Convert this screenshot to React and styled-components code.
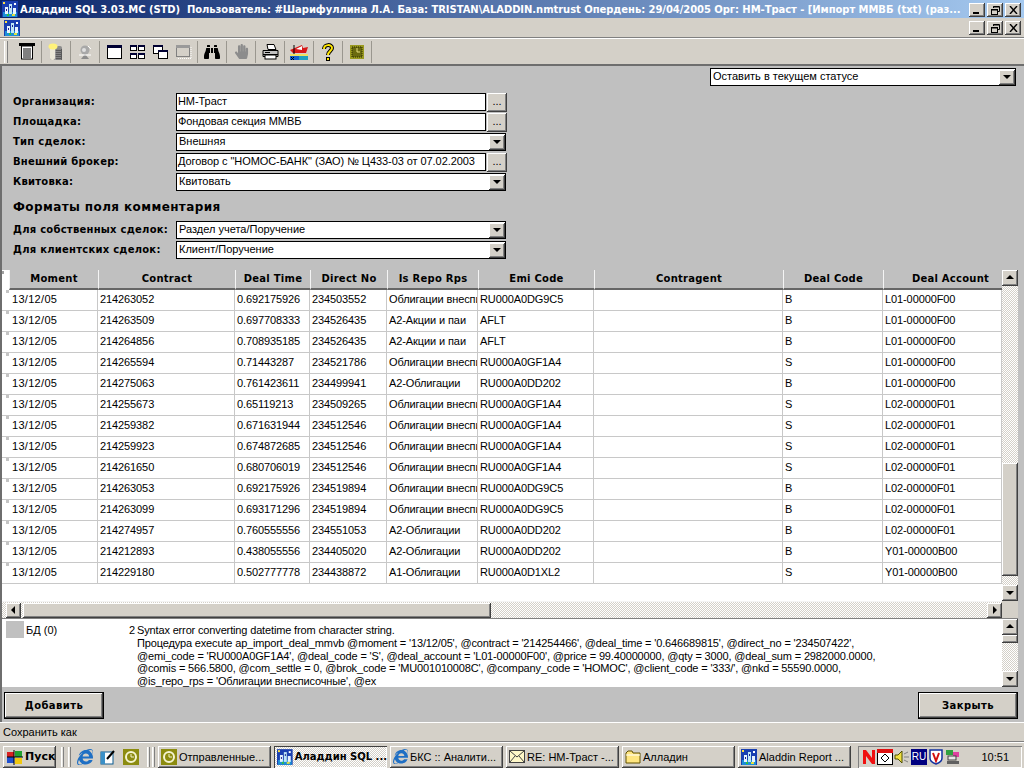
import React from 'react';
import styled, { createGlobalStyle, css } from 'styled-components';
import { FaBinoculars, FaHandPaper, FaInternetExplorer } from 'react-icons/fa';

const GlobalStyle = createGlobalStyle`
  html, body {
    margin: 0;
    padding: 0;
    background: #d4d0c8;
    overflow: hidden;
  }
  * { box-sizing: border-box; }
`;

const UI_FONT = `"Liberation Sans", Arial, sans-serif`;
const BOLD_FONT = `"DejaVu Sans", Verdana, sans-serif`;

const raised = css`
  background-color: #d4d0c8;
  box-shadow: inset -1px -1px 0 #404040, inset 1px 1px 0 #ffffff, inset -2px -2px 0 #808080;
`;

const dither = css`
  background: repeating-conic-gradient(#d4d0c8 0 25%, #ffffff 0 50%) 0 0 / 2px 2px;
`;

const Screen = styled.div`
  width: 1024px;
  height: 768px;
  display: flex;
  flex-direction: column;
  font: 11px ${UI_FONT};
  color: #000;
  overflow: hidden;
`;

const TitleBar = styled.div`
  height: 18px;
  display: flex;
  align-items: center;
  padding: 0 3px 0 2px;
  background: linear-gradient(90deg, #0a246a 0%, #a6caf0 100%);
  flex: none;
`;

const TitleText = styled.div`
  flex: 1;
  margin-left: 2px;
  color: #fff;
  font: bold 10px ${BOLD_FONT};
  letter-spacing: -0.06px;
  white-space: pre;
  overflow: hidden;
`;

const WinButtons = styled.div`
  display: flex;
  align-items: center;
  margin-top: ${p => (p.$inner ? '1px' : '2px')};
`;

const WinButton = styled.div`
  ${raised}
  width: 16px;
  height: 14px;
  display: flex;
  align-items: center;
  justify-content: center;
  margin-left: ${p => (p.$gap ? '2px' : '0')};
`;

const MenuBar = styled.div`
  height: 20px;
  display: flex;
  align-items: center;
  justify-content: space-between;
  padding: 0 3px 0 4px;
  background: #d4d0c8;
  border-bottom: 1px solid #808080;
  box-shadow: 0 1px 0 #ffffff;
  flex: none;
`;

const Toolbar = styled.div`
  height: 25px;
  margin-top: 1px;
  display: flex;
  align-items: center;
  padding-left: 4px;
  background: #d4d0c8;
  flex: none;
`;

const Gripper = styled.div`
  width: 4px;
  height: 22px;
  margin-right: 5px;
  background: #e4e1da;
  border-right: 1px solid #808080;
  border-left: 1px solid #ffffff;
`;

const ToolGroup = styled.div`
  display: flex;
  align-items: center;
  height: 22px;
  padding: ${p => (p.$wide ? '0 2px 0 3px' : '0')};
  border-right: 1px solid #9a978f;
`;

const ToolButton = styled.div`
  width: ${p => (p.$narrow ? '23px' : '28px')};
  display: flex;
  align-items: center;
  justify-content: center;
  color: ${p => p.$color || '#000'};
`;

const Client = styled.div`
  height: 658px;
  flex: none;
  display: flex;
  flex-direction: column;
  background: #c0c0c0;
  border-top: 2px solid #6e6e6e;
  border-left: 2px solid #6e6e6e;
`;

const TopRow = styled.div`
  display: flex;
  justify-content: flex-end;
  padding: 2px 8px 0 0;
`;

const Combo = styled.div`
  width: ${p => p.$width}px;
  height: 18px;
  display: flex;
  align-items: center;
  justify-content: space-between;
  padding: 0 1px 0 2px;
  background: #fff;
  border: 1px solid #000;
  font-size: 11px;
  white-space: nowrap;
`;

const ComboText = styled.span`
  margin-bottom: 2px;
`;

const ComboArrow = styled.div`
  ${raised}
  width: 16px;
  height: 15px;
  display: flex;
  align-items: center;
  justify-content: center;
  flex: none;
  margin-right: -1px;
`;

const Form = styled.div`
  margin: ${p => (p.$flush ? '0' : '7px')} 0 0 11px;
  display: grid;
  grid-template-columns: 163px 1fr;
  grid-auto-rows: 18px;
  row-gap: 2px;
  align-items: center;
`;

const FormLabel = styled.div`
  padding-bottom: 2px;
  font: bold 10px ${BOLD_FONT};
  letter-spacing: 0.25px;
  white-space: nowrap;
`;

const Heading = styled.div`
  height: 30px;
  margin-left: 11px;
  padding-top: 2px;
  display: flex;
  align-items: center;
  font: bold 12px ${BOLD_FONT};
  letter-spacing: 0.4px;
`;

const FieldRow = styled.div`
  display: flex;
  align-items: center;
`;

const Field = styled.div`
  width: 310px;
  height: 18px;
  display: flex;
  align-items: center;
  padding: 0 0 2px 1px;
  background: #fff;
  border: 1px solid #000;
  letter-spacing: -0.07px;
  white-space: nowrap;
  overflow: hidden;
`;

const DotsButton = styled.div`
  ${raised}
  width: 20px;
  height: 19px;
  margin-left: 1px;
  display: flex;
  align-items: center;
  justify-content: center;
  padding-bottom: 2px;
  font-size: 11px;
`;

const TableArea = styled.div`
  margin-top: 11px;
  width: 1016px;
  height: 348px;
  display: grid;
  grid-template-columns: 1000px 16px;
  grid-template-rows: 331px 17px;
`;

const TableBody = styled.div`
  background: #fff;
  overflow: hidden;
`;

const Row = styled.div`
  display: grid;
  grid-template-columns: 7px 89px 137px 75px 77px 91px 116px 189px 100px 119px;
  height: ${p => (p.$head ? '20px' : '21px')};
`;

const HeadCorner = styled.div`
  background: linear-gradient(#a0a0a0, #a0a0a0) right 5px top 1px / 2px 3px no-repeat, #fff;
`;

const HeadCell = styled.div`
  background: #c0c0c0;
  border-left: 1px solid #f4f4f4;
  border-bottom: 2px solid #666;
  display: flex;
  align-items: center;
  justify-content: center;
  padding: 0 0 2px ${p => (p.$clipped ? '15px' : '0')};
  font: bold 10px ${BOLD_FONT};
  letter-spacing: 0.25px;
  white-space: nowrap;
  overflow: hidden;
`;

const RowMark = styled.div`
  background: linear-gradient(#c4c4c4, #c4c4c4) right top / 3px 3px no-repeat, #fff;
  border-bottom: 1px solid #c8c8c8;
`;

const Cell = styled.div`
  display: flex;
  align-items: center;
  padding: 0 0 2px ${p => (p.$date ? '3px' : '2px')};
  border-right: 1px solid #c8c8c8;
  border-bottom: 1px solid #c8c8c8;
  font-size: 11px;
  letter-spacing: ${p => (p.$date ? '0.3px' : '-0.1px')};
  white-space: nowrap;
  overflow: hidden;
`;

const VScroll = styled.div`
  display: flex;
  flex-direction: column;
  height: ${p => p.$height}px;
  ${dither}
`;

const ScrollArrow = styled.div`
  ${raised}
  width: ${p => p.$size || 16}px;
  height: ${p => p.$size || 16}px;
  flex: none;
  display: flex;
  align-items: center;
  justify-content: center;
`;

const Spacer = styled.div`
  flex: ${p => (p.$size ? `0 0 ${p.$size}px` : '1')};
`;

const ScrollThumb = styled.div`
  ${raised}
  flex: 0 0 ${p => p.$size}px;
`;

const HScroll = styled.div`
  display: flex;
  align-items: center;
  padding-left: 4px;
  border-top: 1px solid #f4f4f4;
  ${dither}
`;

const HThumb = styled.div`
  ${raised}
  width: 468px;
  height: 15px;
  margin-left: 2px;
  flex: none;
`;

const Corner = styled.div`
  background: #d4d0c8;
`;

const LogArea = styled.div`
  display: grid;
  grid-template-columns: 1000px 16px;
  height: 69px;
  width: 1016px;
  border-top: 1px solid #808080;
`;

const LogBody = styled.div`
  display: flex;
  background: #fff;
  padding: 2px 0 0 4px;
  overflow: hidden;
`;

const LogSwatch = styled.div`
  width: 18px;
  height: 17px;
  background: #c0c0c0;
  flex: none;
`;

const LogSource = styled.div`
  width: 103px;
  padding: 3px 0 0 2px;
  flex: none;
`;

const LogNumber = styled.div`
  width: 8px;
  padding-top: 3px;
  text-align: right;
  flex: none;
`;

const LogText = styled.div`
  padding: 3px 0 0 2px;
  line-height: 12.75px;
  font-size: 11px;
  white-space: pre;
  letter-spacing: -0.15px;
`;

const Footer = styled.div`
  flex: 1;
  display: flex;
  justify-content: space-between;
  padding: 5px 2px 0 2px;
  width: 1018px;
`;

const BigButton = styled.div`
  ${raised}
  width: ${p => p.$width}px;
  height: 27px;
  display: flex;
  align-items: center;
  justify-content: center;
  border: 1px solid #000;
  font: bold 10px ${BOLD_FONT};
  letter-spacing: 0.42px;
`;

const StatusBar = styled.div`
  height: 20px;
  flex: none;
  display: flex;
  align-items: center;
  padding-left: 3px;
  background: #d4d0c8;
  border-top: 1px solid #fff;
  border-bottom: 1px solid #808080;
  font-size: 11px;
`;

const Taskbar = styled.div`
  height: 26px;
  flex: none;
  display: flex;
  align-items: center;
  padding: 2px 2px 0 3px;
  background: #d4d0c8;
  border-top: 1px solid #fff;
`;

const StartButton = styled.div`
  ${raised}
  width: 53px;
  height: 22px;
  display: flex;
  align-items: center;
  padding-left: 3px;
  gap: 1px;
  font: bold 11px ${BOLD_FONT};
`;

const TaskDivider = styled.div`
  width: 3px;
  height: 20px;
  margin: ${p => p.$margin};
  background: #e8e6e0;
  border-left: 1px solid #fff;
  border-right: 1px solid #808080;
`;

const QuickLaunch = styled.div`
  display: flex;
  align-items: center;
  gap: 7px;
  color: #1f6fc4;
`;

const TaskList = styled.div`
  display: flex;
  gap: 3px;
`;

const TaskButton = styled.div`
  ${p =>
    p.$active
      ? css`
          box-shadow: inset 1px 1px 0 #404040, inset -1px -1px 0 #fff;
          background: repeating-conic-gradient(#d4d0c8 0 25%, #ffffff 0 50%) 0 0 / 2px 2px;
          font: bold 10px ${BOLD_FONT};
        `
      : raised}
  width: 113px;
  height: 22px;
  display: flex;
  align-items: center;
  gap: 2px;
  padding-left: 3px;
  white-space: nowrap;
  overflow: hidden;
`;

const Tray = styled.div`
  margin-left: auto;
  width: 164px;
  height: 22px;
  display: flex;
  align-items: center;
  padding-left: 4px;
  gap: 1px;
  box-shadow: inset 1px 1px 0 #808080, inset -1px -1px 0 #fff;
`;

const Clock = styled.div`
  margin-left: auto;
  margin-right: 13px;
  font-size: 11px;
`;

const RuBadge = styled.div`
  width: 16px;
  height: 16px;
  background: #000080;
  color: #fff;
  font-size: 10px;
  display: flex;
  align-items: center;
  justify-content: center;
`;

function Arrow({ dir }) {
  const points = {
    up: '4,1 0,5 8,5',
    down: '0,2 8,2 4,6',
    left: '5,0 5,8 1,4',
    right: '2,0 2,8 6,4',
  }[dir];
  return (
    <svg width="8" height="8" viewBox="0 0 8 8">
      <polygon points={points} fill="#000" />
    </svg>
  );
}

function AladdinIcon({ size = 16 }) {
  return (
    <svg width={size} height={size} viewBox="0 0 16 16">
      <rect width="16" height="16" fill="#1a3fb0" />
      <rect x="1" y="11" width="14" height="5" fill="#1c8fd8" />
      <rect x="3" y="6" width="3" height="7" fill="#e8f4ff" />
      <rect x="7" y="3" width="3" height="10" fill="#bfe6f5" />
      <rect x="11" y="7" width="3" height="6" fill="#e8f4ff" />
      <rect x="1" y="1" width="2" height="2" fill="#ffe040" />
      <rect x="12" y="2" width="2" height="2" fill="#ffffff" />
      <rect x="5" y="13" width="2" height="2" fill="#30c040" />
      <rect x="10" y="13" width="3" height="2" fill="#e0e040" />
      <rect x="4" y="8" width="1" height="2" fill="#20208a" />
      <rect x="8" y="5" width="1" height="2" fill="#20208a" />
    </svg>
  );
}

function MinimizeGlyph() {
  return (
    <svg width="8" height="8" viewBox="0 0 8 8">
      <rect x="0" y="6" width="6" height="2" fill="#000" />
    </svg>
  );
}

function RestoreGlyph() {
  return (
    <svg width="9" height="9" viewBox="0 0 9 9" fill="none" stroke="#000">
      <path d="M2.5 2V.5h6v5H7" />
      <path d="M2 1h6" />
      <rect x=".5" y="3.5" width="6" height="5" />
      <path d="M0 4h7" />
    </svg>
  );
}

function CloseGlyph() {
  return (
    <svg width="9" height="8" viewBox="0 0 9 8" stroke="#000" strokeWidth="1.4">
      <path d="M1 0l7 8M8 0L1 8" />
    </svg>
  );
}

function WindowButtons({ inner }) {
  return (
    <WinButtons $inner={inner}>
      <WinButton><MinimizeGlyph /></WinButton>
      <WinButton $gap><RestoreGlyph /></WinButton>
      <WinButton $gap><CloseGlyph /></WinButton>
    </WinButtons>
  );
}

function ListIcon() {
  return (
    <svg width="16" height="17" viewBox="0 0 16 17">
      <rect x="0" y="0" width="16" height="3" fill="#000" />
      <rect x="2.5" y="3" width="11" height="13" fill="#fff" stroke="#000" />
      <path d="M4 6h8M4 8h8M4 10h8M4 12h8M4 14h8" stroke="#000" />
    </svg>
  );
}

function BaseIcon() {
  return (
    <svg width="16" height="18" viewBox="0 0 16 18">
      <rect x="2" y="3" width="12" height="14" rx="2" fill="#8c8c8c" />
      <rect x="2" y="3" width="5" height="14" rx="2" fill="#ece9d8" />
      <rect x="8" y="6" width="6" height="11" fill="#4a4a4a" opacity=".75" />
      <path d="M8 6v11M10 6v11M12 6v11" stroke="#b0b0b0" strokeDasharray="1 1" />
      <ellipse cx="5" cy="3.5" rx="4.5" ry="3" fill="#fff27a" />
    </svg>
  );
}

function GrayToolIcon() {
  return (
    <svg width="16" height="16" viewBox="0 0 16 16">
      <circle cx="8" cy="6" r="4.5" fill="#a8a8a8" />
      <circle cx="7" cy="6" r="2" fill="#e0e0e0" />
      <path d="M4 15l4-5 4 5z" fill="#8c8c8c" />
      <path d="M11 2l3 3M2 11h12" stroke="#fff" />
    </svg>
  );
}

function WindowIcon() {
  return (
    <svg width="15" height="14" viewBox="0 0 15 14">
      <rect x=".5" y=".5" width="14" height="13" fill="#fff" stroke="#000" />
      <rect x="0" y="0" width="15" height="3" fill="#000033" />
    </svg>
  );
}

function TileIcon() {
  return (
    <svg width="15" height="14" viewBox="0 0 15 14">
      {[[0, 0], [8, 0], [0, 8], [8, 8]].map(([x, y]) => (
        <g key={`${x}-${y}`}>
          <rect x={x + 0.5} y={y + 0.5} width="6" height="5" fill="#fff" stroke="#000" />
          <rect x={x} y={y} width="7" height="2" fill="#000033" />
        </g>
      ))}
    </svg>
  );
}

function CascadeIcon() {
  return (
    <svg width="15" height="14" viewBox="0 0 15 14">
      <rect x=".5" y=".5" width="9" height="8" fill="#fff" stroke="#000" />
      <rect x="0" y="0" width="10" height="2" fill="#000033" />
      <rect x="5.5" y="5.5" width="9" height="8" fill="#fff" stroke="#000" />
      <rect x="5" y="5" width="10" height="2" fill="#000033" />
    </svg>
  );
}

function DisabledWindowIcon() {
  return (
    <svg width="16" height="14" viewBox="0 0 16 14">
      <rect x=".5" y=".5" width="13" height="11" fill="none" stroke="#808080" />
      <rect x="0" y="0" width="14" height="3" fill="#9a9a9a" />
      <path d="M15 2v12M2 13.5h13" stroke="#fff" strokeDasharray="1 1" />
    </svg>
  );
}

function PrinterIcon() {
  return (
    <svg width="17" height="16" viewBox="0 0 17 16">
      <path d="M5 .5h7l2 5H6z" fill="#fff" stroke="#000" />
      <path d="M1 6.5h15v6H1z" fill="#c0c0c0" stroke="#000" />
      <rect x="3" y="11" width="11" height="4" fill="#fff" stroke="#000" />
      <path d="M3 8.5h5M1 10.5h15" stroke="#000" />
    </svg>
  );
}

function ShipIcon() {
  return (
    <svg width="18" height="16" viewBox="0 0 18 16">
      <path d="M0 6l12-5 1 3 5-1-2 6H3z" fill="#d81818" />
      <path d="M6 5l6-3v4z" fill="#fff" />
      <rect x="0" y="10" width="18" height="2" fill="#f0e060" />
      <rect x="0" y="12" width="9" height="4" fill="#1060d0" />
      <rect x="9" y="12" width="9" height="4" fill="#20a0c0" />
      <path d="M1 13l3 3M4 13L1 16" stroke="#000" />
      <path d="M4 1v9" stroke="#000" />
    </svg>
  );
}

function HelpIcon() {
  return (
    <svg width="12" height="18" viewBox="0 0 12 18" fill="none">
      <path d="M2 6c0-5 8-5 8-1 0 3-4 3-4 7" stroke="#000" strokeWidth="4" />
      <path d="M2 6c0-5 8-5 8-1 0 3-4 3-4 7" stroke="#ffe600" strokeWidth="2" />
      <rect x="4" y="14" width="4" height="4" fill="#000" />
      <rect x="5" y="15" width="2" height="2" fill="#ffe600" />
    </svg>
  );
}

function ClockSquare({ size = 14 }) {
  return (
    <svg width={size} height={size} viewBox="0 0 14 14">
      <rect width="14" height="14" fill="#9a9a20" />
      <rect x="2" y="2" width="10" height="10" fill="#6a6a10" stroke="#2a2a00" strokeDasharray="1 1" />
      <path d="M7 3v4h3" stroke="#e8e080" fill="none" />
    </svg>
  );
}

function ClockRound({ size = 16 }) {
  return (
    <svg width={size} height={size} viewBox="0 0 16 16">
      <rect width="16" height="16" fill="#8c8c10" />
      <circle cx="8" cy="8" r="5" fill="none" stroke="#f4f4d0" strokeWidth="2" />
      <path d="M8 5v3h3" stroke="#f4f4d0" fill="none" />
    </svg>
  );
}

function WinFlag() {
  return (
    <svg width="18" height="16" viewBox="0 0 18 16">
      <path d="M1 3h7v5H1z" fill="#d82020" />
      <path d="M1 8h7v6H1z" fill="#2050d0" />
      <path d="M9 2h7v6H9z" fill="#20a030" />
      <path d="M9 9h7v6H9z" fill="#f0c810" />
      <path d="M8 1v15M1 8h16" stroke="#000" />
    </svg>
  );
}

function NoteIcon() {
  return (
    <svg width="16" height="16" viewBox="0 0 16 16">
      <rect x="1" y="3" width="12" height="12" fill="#fff" stroke="#0a5a90" />
      <rect x="1" y="3" width="4" height="12" fill="#3a90c8" />
      <path d="M7 10l7-8" stroke="#000" strokeWidth="2" />
    </svg>
  );
}

function MailIcon() {
  return (
    <svg width="16" height="13" viewBox="0 0 16 13">
      <rect x=".5" y=".5" width="15" height="12" fill="#fff8c8" stroke="#404040" />
      <path d="M1 1l7 6 7-6M1 12l5-6M15 12l-5-6" stroke="#404040" fill="none" />
    </svg>
  );
}

function FolderIcon() {
  return (
    <svg width="16" height="14" viewBox="0 0 16 14">
      <path d="M1 3l2-2h4l1 2h7v10H1z" fill="#ffe680" stroke="#605000" />
      <path d="M1 5h14" stroke="#fff" />
    </svg>
  );
}

function SmallIe() {
  return <FaInternetExplorer size={15} color="#1f6fc4" />;
}

function TrayIcons() {
  return (
    <>
      <svg width="14" height="16" viewBox="0 0 14 16">
        <path d="M1 15V1h3l6 8V1h3v14h-3L4 7v8z" fill="#f01010" />
      </svg>
      <svg width="16" height="16" viewBox="0 0 16 16">
        <rect x=".5" y=".5" width="15" height="15" fill="#fff" stroke="#000" />
        <rect x="0" y="0" width="16" height="4" fill="#e01010" />
        <path d="M8 5l4 4-4 4-4-4z" fill="none" stroke="#000" />
      </svg>
      <svg width="16" height="16" viewBox="0 0 16 16">
        <path d="M1 6h3l4-4v12l-4-4H1z" fill="#f0e040" stroke="#505000" />
        <path d="M10 5l4-2M10 8h5M10 11l4 2" stroke="#808080" />
      </svg>
      <RuBadge>RU</RuBadge>
      <svg width="16" height="16" viewBox="0 0 16 16">
        <path d="M2 1h12v8c0 3-3 5-6 6-3-1-6-3-6-6z" fill="#fff" stroke="#1030a0" strokeWidth="1.5" />
        <path d="M5 4l3 8 3-8" fill="none" stroke="#d01010" strokeWidth="2" />
      </svg>
      <svg width="16" height="16" viewBox="0 0 16 16">
        <rect x="1" y="1" width="7" height="5" fill="#30a040" />
        <rect x="8" y="3" width="6" height="5" fill="#e040a0" />
        <rect x="3" y="7" width="8" height="4" fill="#e8e8e8" stroke="#404040" />
        <rect x="2" y="12" width="12" height="3" fill="#606060" />
      </svg>
    </>
  );
}

const COLUMNS = ['Moment', 'Contract', 'Deal Time', 'Direct No', 'Is Repo Rps', 'Emi Code', 'Contragent', 'Deal Code', 'Deal Account'];

const EXTRA = 'Облигации внесписочные';

const ROWS = [
  ['214263052', '0.692175926', '234503552', EXTRA, 'RU000A0DG9C5', 'B', 'L01-00000F00'],
  ['214263509', '0.697708333', '234526435', 'А2-Акции и паи', 'AFLT', 'B', 'L01-00000F00'],
  ['214264856', '0.708935185', '234526435', 'А2-Акции и паи', 'AFLT', 'B', 'L01-00000F00'],
  ['214265594', '0.71443287', '234521786', EXTRA, 'RU000A0GF1A4', 'S', 'L01-00000F00'],
  ['214275063', '0.761423611', '234499941', 'А2-Облигации', 'RU000A0DD202', 'B', 'L01-00000F00'],
  ['214255673', '0.65119213', '234509265', EXTRA, 'RU000A0GF1A4', 'S', 'L02-00000F01'],
  ['214259382', '0.671631944', '234512546', EXTRA, 'RU000A0GF1A4', 'S', 'L02-00000F01'],
  ['214259923', '0.674872685', '234512546', EXTRA, 'RU000A0GF1A4', 'S', 'L02-00000F01'],
  ['214261650', '0.680706019', '234512546', EXTRA, 'RU000A0GF1A4', 'S', 'L02-00000F01'],
  ['214263053', '0.692175926', '234519894', EXTRA, 'RU000A0DG9C5', 'B', 'L02-00000F01'],
  ['214263099', '0.693171296', '234519894', EXTRA, 'RU000A0DG9C5', 'B', 'L02-00000F01'],
  ['214274957', '0.760555556', '234551053', 'А2-Облигации', 'RU000A0DD202', 'B', 'L02-00000F01'],
  ['214212893', '0.438055556', '234405020', 'А2-Облигации', 'RU000A0DD202', 'B', 'Y01-00000B00'],
  ['214229180', '0.502777778', '234438872', 'А1-Облигации', 'RU000A0D1XL2', 'S', 'Y01-00000B00'],
];

const LOG_LINES = `Syntax error converting datetime from character string.
Процедура execute ap_import_deal_mmvb @moment = '13/12/05', @contract = '214254466', @deal_time = '0.646689815', @direct_no = '234507422',
@emi_code = 'RU000A0GF1A4', @deal_code = 'S', @deal_account = 'L01-00000F00', @price = 99.40000000, @qty = 3000, @deal_sum = 2982000.0000,
@comis = 566.5800, @com_settle = 0, @brok_code = 'MU001010008C', @company_code = 'НОМОС', @client_code = '333/', @nkd = 55590.0000,
@is_repo_rps = 'Облигации внесписочные', @ex`;

function SelectBox({ width, children }) {
  return (
    <Combo $width={width}>
      <ComboText>{children}</ComboText>
      <ComboArrow><Arrow dir="down" /></ComboArrow>
    </Combo>
  );
}

export default function App() {
  return (
    <Screen>
      <GlobalStyle />
      <TitleBar>
        <AladdinIcon />
        <TitleText>
          {'Аладдин SQL 3.03.MC (STD)  Пользователь: #Шарифуллина Л.А. База: TRISTAN\\ALADDIN.nmtrust Опердень: 29/04/2005 Орг: НМ-Траст - [Импорт ММВБ (txt) (раз...'}
        </TitleText>
        <WindowButtons />
      </TitleBar>

      <MenuBar>
        <AladdinIcon />
        <WindowButtons inner />
      </MenuBar>

      <Toolbar>
        <Gripper />
        <ToolGroup><ToolButton><ListIcon /></ToolButton></ToolGroup>
        <ToolGroup><ToolButton><BaseIcon /></ToolButton></ToolGroup>
        <ToolGroup><ToolButton><GrayToolIcon /></ToolButton></ToolGroup>
        <ToolGroup $wide>
          <ToolButton $narrow><WindowIcon /></ToolButton>
          <ToolButton $narrow><TileIcon /></ToolButton>
          <ToolButton $narrow><CascadeIcon /></ToolButton>
          <ToolButton $narrow><DisabledWindowIcon /></ToolButton>
        </ToolGroup>
        <ToolGroup><ToolButton><FaBinoculars size={16} /></ToolButton></ToolGroup>
        <ToolGroup><ToolButton $color="#8c8c8c"><FaHandPaper size={15} /></ToolButton></ToolGroup>
        <ToolGroup><ToolButton><PrinterIcon /></ToolButton></ToolGroup>
        <ToolGroup><ToolButton><ShipIcon /></ToolButton></ToolGroup>
        <ToolGroup><ToolButton><HelpIcon /></ToolButton></ToolGroup>
        <ToolGroup><ToolButton><ClockSquare /></ToolButton></ToolGroup>
      </Toolbar>

      <Client>
        <TopRow>
          <SelectBox width={306}>Оставить в текущем статусе</SelectBox>
        </TopRow>

        <Form>
          <FormLabel>Организация:</FormLabel>
          <FieldRow><Field>НМ-Траст</Field><DotsButton>...</DotsButton></FieldRow>
          <FormLabel>Площадка:</FormLabel>
          <FieldRow><Field>Фондовая секция ММВБ</Field><DotsButton>...</DotsButton></FieldRow>
          <FormLabel>Тип сделок:</FormLabel>
          <SelectBox width={330}>Внешняя</SelectBox>
          <FormLabel>Внешний брокер:</FormLabel>
          <FieldRow><Field>Договор с "НОМОС-БАНК" (ЗАО) № Ц433-03 от 07.02.2003</Field><DotsButton>...</DotsButton></FieldRow>
          <FormLabel>Квитовка:</FormLabel>
          <SelectBox width={330}>Квитовать</SelectBox>
        </Form>

        <Heading>Форматы поля комментария</Heading>

        <Form $flush>
          <FormLabel>Для собственных сделок:</FormLabel>
          <SelectBox width={330}>Раздел учета/Поручение</SelectBox>
          <FormLabel>Для клиентских сделок:</FormLabel>
          <SelectBox width={330}>Клиент/Поручение</SelectBox>
        </Form>

        <TableArea>
          <TableBody>
            <Row $head>
              <HeadCorner />
              {COLUMNS.map(name => (
                <HeadCell key={name} $clipped={name === 'Deal Account'}>{name}</HeadCell>
              ))}
            </Row>
            {ROWS.map(cells => (
              <Row key={cells[0]}>
                <RowMark />
                <Cell $date>13/12/05</Cell>
                <Cell>{cells[0]}</Cell>
                <Cell>{cells[1]}</Cell>
                <Cell>{cells[2]}</Cell>
                <Cell>{cells[3]}</Cell>
                <Cell>{cells[4]}</Cell>
                <Cell />
                <Cell>{cells[5]}</Cell>
                <Cell>{cells[6]}</Cell>
              </Row>
            ))}
          </TableBody>

          <VScroll $height={331}>
            <ScrollArrow><Arrow dir="up" /></ScrollArrow>
            <Spacer />
            <ScrollThumb $size={113} />
            <Spacer $size={9} />
            <ScrollArrow><Arrow dir="down" /></ScrollArrow>
          </VScroll>

          <HScroll>
            <ScrollArrow $size={15}><Arrow dir="left" /></ScrollArrow>
            <HThumb />
            <Spacer />
            <ScrollArrow $size={15}><Arrow dir="right" /></ScrollArrow>
          </HScroll>
          <Corner />
        </TableArea>

        <LogArea>
          <LogBody>
            <LogSwatch />
            <LogSource>БД (0)</LogSource>
            <LogNumber>2</LogNumber>
            <LogText>{LOG_LINES}</LogText>
          </LogBody>
          <VScroll $height={68}>
            <ScrollArrow><Arrow dir="up" /></ScrollArrow>
            <ScrollThumb $size={8} />
            <Spacer />
            <ScrollArrow><Arrow dir="down" /></ScrollArrow>
          </VScroll>
        </LogArea>

        <Footer>
          <BigButton $width={100}>Добавить</BigButton>
          <BigButton $width={100}>Закрыть</BigButton>
        </Footer>
      </Client>

      <StatusBar>Сохранить как</StatusBar>

      <Taskbar>
        <StartButton><WinFlag />Пуск</StartButton>
        <TaskDivider $margin="0 4px 0 5px" />
        <TaskDivider $margin="0 6px 0 0" />
        <QuickLaunch>
          <FaInternetExplorer size={16} />
          <NoteIcon />
          <ClockRound />
        </QuickLaunch>
        <TaskDivider $margin="0 2px 0 8px" />
        <TaskDivider $margin="0 3px 0 0" />
        <TaskList>
          <TaskButton><ClockRound />Отправленные...</TaskButton>
          <TaskButton $active><AladdinIcon />Аладдин SQL ...</TaskButton>
          <TaskButton><SmallIe />БКС :: Аналити...</TaskButton>
          <TaskButton><MailIcon />RE: НМ-Траст -...</TaskButton>
          <TaskButton><FolderIcon />Алладин</TaskButton>
          <TaskButton><AladdinIcon />Aladdin Report ...</TaskButton>
        </TaskList>
        <Tray>
          <TrayIcons />
          <Clock>10:51</Clock>
        </Tray>
      </Taskbar>
    </Screen>
  );
}
